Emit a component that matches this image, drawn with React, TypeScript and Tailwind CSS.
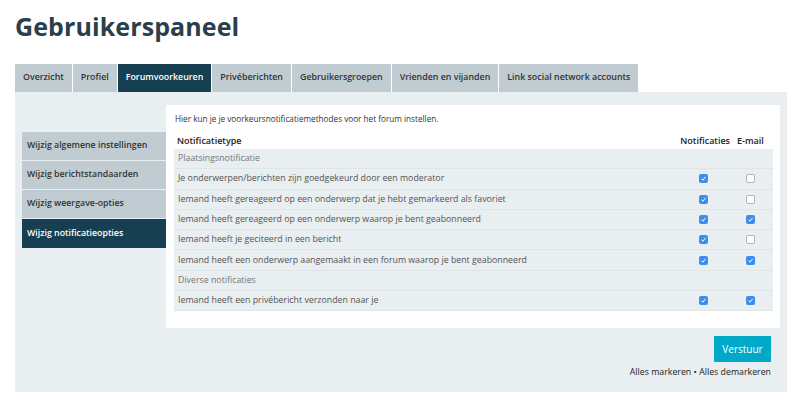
import React from "react";

const tabs = [
  "Overzicht",
  "Profiel",
  "Forumvoorkeuren",
  "Privéberichten",
  "Gebruikersgroepen",
  "Vrienden en vijanden",
  "Link social network accounts",
];

const menu = [
  "Wijzig algemene instellingen",
  "Wijzig berichtstandaarden",
  "Wijzig weergave-opties",
  "Wijzig notificatieopties",
];

type Row = { label: string; section?: boolean; notif?: boolean; mail?: boolean };

const rows: Row[] = [
  { label: "Plaatsingsnotificatie", section: true },
  { label: "Je onderwerpen/berichten zijn goedgekeurd door een moderator", notif: true, mail: false },
  { label: "Iemand heeft gereageerd op een onderwerp dat je hebt gemarkeerd als favoriet", notif: true, mail: false },
  { label: "Iemand heeft gereageerd op een onderwerp waarop je bent geabonneerd", notif: true, mail: true },
  { label: "Iemand heeft je geciteerd in een bericht", notif: true, mail: false },
  { label: "Iemand heeft een onderwerp aangemaakt in een forum waarop je bent geabonneerd", notif: true, mail: true },
  { label: "Diverse notificaties", section: true },
  { label: "Iemand heeft een privébericht verzonden naar je", notif: true, mail: true },
];

const Check = ({ on }: { on?: boolean }) =>
  on ? (
    <span className="flex h-[9px] w-[9px] items-center justify-center rounded-[2px] bg-[#3b8df0]">
      <svg viewBox="0 0 10 10" className="h-[7px] w-[7px]">
        <path d="M2 5.2 L4.2 7.4 L8 2.6" fill="none" stroke="white" strokeWidth="1.4" />
      </svg>
    </span>
  ) : (
    <span className="block h-[9px] w-[9px] rounded-[2px] border border-[#b5b5b5] bg-white" />
  );

export default function App() {
  return (
    <div className="h-[398px] w-[800px] bg-white font-['Open_Sans',sans-serif] text-[#333]">
      <div className="px-[15px] pt-[10px]">
        <h1 className="text-[25px] font-bold leading-[32px] tracking-[0.1px] text-[#2b3e4c]">
          Gebruikerspaneel
        </h1>

        <nav className="mt-[22px] flex gap-px">
          {tabs.map((t, i) => (
            <div
              key={t}
              className={
                i === 2
                  ? "flex h-[28px] items-center bg-[#173f52] px-[8px] text-[8.85px] font-semibold text-white"
                  : "flex h-[28px] items-center bg-[#c0ccd2] px-[8px] text-[8.85px] font-semibold text-[#333]"
              }
            >
              {t}
            </div>
          ))}
        </nav>

        <div className="flex h-[300px] w-[772px] bg-[#e9eef0] pt-[13px] pl-[7px] pr-[7px]">
          <ul className="mt-[27px] flex w-[144px] shrink-0 flex-col gap-px self-start">
            {menu.map((m, i) => (
              <li
                key={m}
                className={
                  i === 3
                    ? "flex h-[29px] items-center bg-[#173f52] px-[5px] text-[8.8px] font-semibold text-white"
                    : "flex h-[28px] items-center bg-[#c0ccd2] px-[5px] text-[8.8px] font-semibold text-[#333]"
                }
              >
                {m}
              </li>
            ))}
          </ul>

          <div className="flex flex-1 flex-col items-end">
            <div className="w-full bg-white pb-[17px] pl-[8px] pr-[7px] pt-[8px]">
              <p className="pl-px text-[8.2px] leading-[12px] text-[#333]">
                Hier kun je je voorkeursnotificatiemethodes voor het forum instellen.
              </p>
              <div className="mt-[7px] flex h-[17px] items-center text-[9px] font-semibold text-[#222]">
                <span className="flex-1 pl-[3px]">Notificatietype</span>
                <span className="w-[53px] pr-[2px] text-right">Notificaties</span>
                <span className="w-[41px] pl-[5px] text-left">E-mail</span>
              </div>
              <div className="bg-[#e9eef0]">
                {rows.map((r) => (
                  <div
                    key={r.label}
                    className="flex h-[20.3px] items-center border-b border-[#dfe5e8] text-[8.8px] text-[#555]"
                  >
                    <span className={r.section ? "flex-1 pl-[4px] text-[#777]" : "flex-1 pl-[4px]"}>
                      {r.label}
                    </span>
                    <span className="flex w-[48px] justify-center">
                      {!r.section && <Check on={r.notif} />}
                    </span>
                    <span className="flex w-[46px] justify-center">
                      {!r.section && <Check on={r.mail} />}
                    </span>
                  </div>
                ))}
              </div>
            </div>

            <button className="mt-[8px] mr-[9px] h-[26px] w-[57px] bg-[#00a9c7] text-[10px] text-white">
              Verstuur
            </button>
            <p className="mr-[9px] mt-[4px] text-[8.8px] text-[#222]">
              Alles markeren • Alles demarkeren
            </p>
          </div>
        </div>
      </div>
    </div>
  );
}
